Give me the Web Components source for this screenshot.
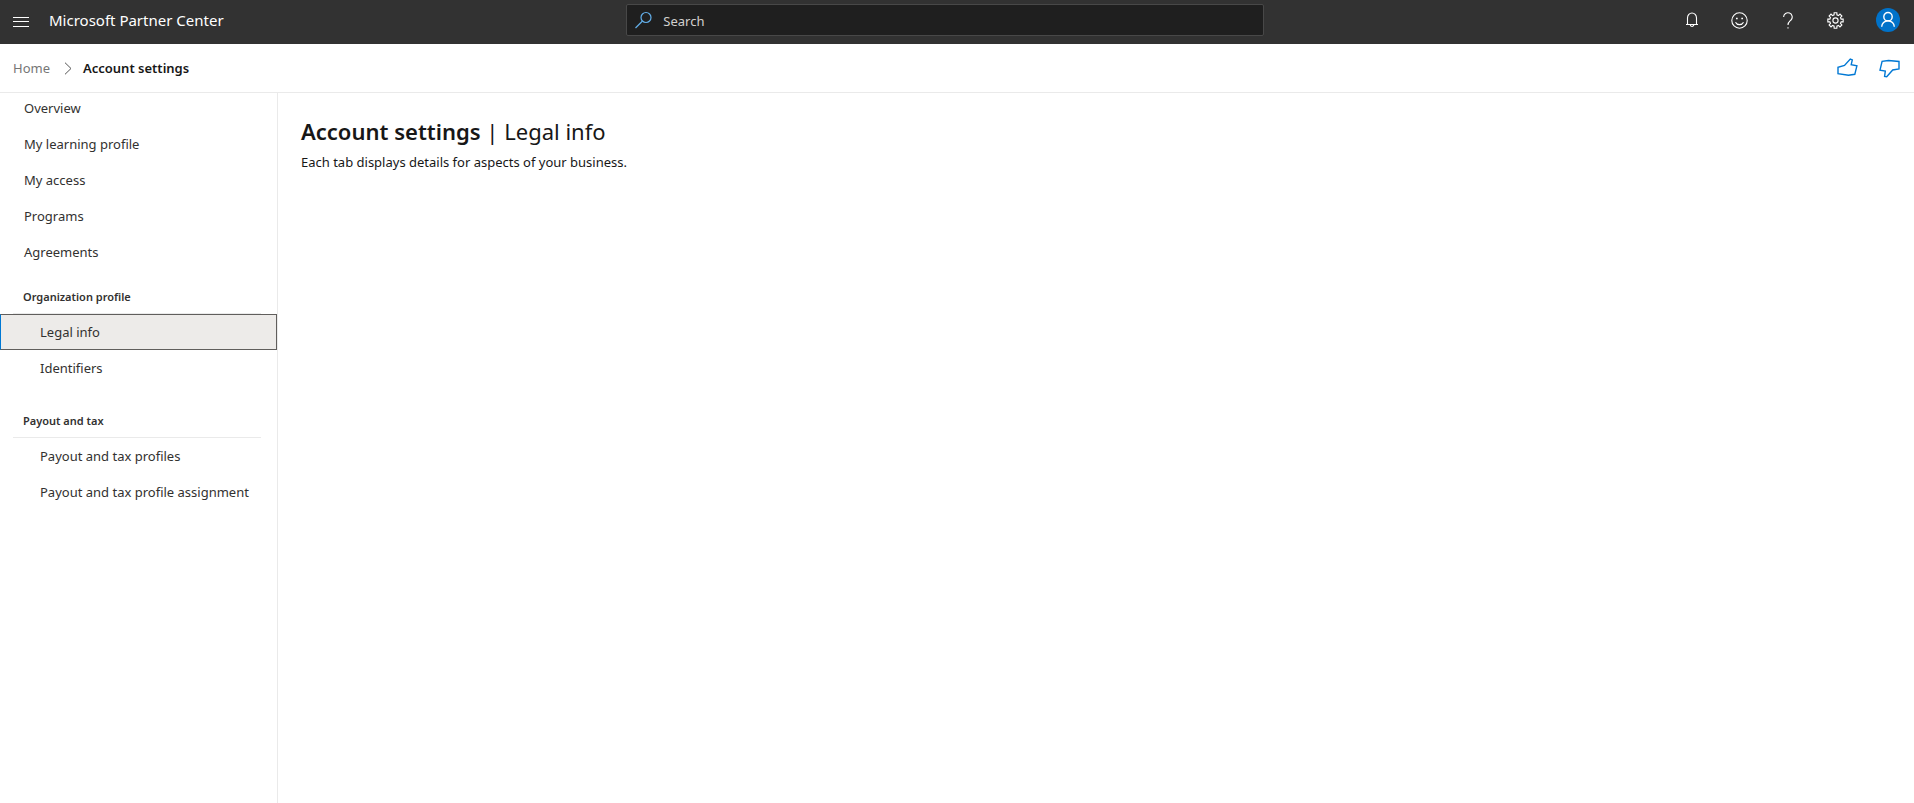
<!DOCTYPE html>
<html lang="en">
<head>
<meta charset="utf-8">
<title>Account settings - Microsoft Partner Center</title>
<style>
html, body { height: 100%; }
body { margin: 0; background: #fff; color: #323130; font: 13px/20px "Noto Sans", "Open Sans", sans-serif; }
</style>
</head>
<body>
<partner-app></partner-app>

<template id="partner-app">
  <style>
    :host { display: flex; flex-direction: column; min-height: 100%; }
    .body { display: flex; flex: 1; }
    main { flex: 1; padding: 24px 23px; }
  </style>
  <top-bar heading="Microsoft Partner Center">
    <icon-button icon="bell" label="Notifications"></icon-button>
    <icon-button icon="smile" label="Feedback"></icon-button>
    <icon-button icon="help" label="Help"></icon-button>
    <icon-button icon="gear" label="Settings"></icon-button>
    <icon-button icon="person" label="Account"></icon-button>
  </top-bar>
  <crumb-bar>
    <a slot="parent" href="#home">Home</a>
    <span slot="current" aria-current="page">Account settings</span>
    <icon-button icon="thumb-up" label="Like"></icon-button>
    <icon-button icon="thumb-down" label="Dislike"></icon-button>
  </crumb-bar>
  <div class="body">
    <side-nav>
      <nav-item>Overview</nav-item>
      <nav-item>My learning profile</nav-item>
      <nav-item>My access</nav-item>
      <nav-item>Programs</nav-item>
      <nav-item>Agreements</nav-item>
      <nav-group>
        <span slot="heading">Organization profile</span>
        <nav-item nested selected>Legal info</nav-item>
        <nav-item nested>Identifiers</nav-item>
      </nav-group>
      <nav-group>
        <span slot="heading">Payout and tax</span>
        <nav-item nested>Payout and tax profiles</nav-item>
        <nav-item nested>Payout and tax profile assignment</nav-item>
      </nav-group>
    </side-nav>
    <main>
      <page-heading>
        <b slot="area">Account settings</b>
        <span slot="page">Legal info</span>
        <span slot="summary">Each tab displays details for aspects of your business.</span>
      </page-heading>
    </main>
  </div>
</template>

<template id="top-bar">
  <style>
    :host { display: flex; justify-content: space-between; height: 44px; background: #323232; color: #fff; }
    .brand { display: flex; align-items: center; flex: none; width: 222px; }
    .menu { display: grid; place-items: center; flex: none; width: 42px; height: 40px; padding: 0; border: 0; background: none; color: inherit; }
    .title { margin-left: 7px; padding-bottom: 4px; font-size: 15px; white-space: nowrap; }
    .search { display: flex; align-items: center; box-sizing: border-box; width: 33.3%; height: 32px; margin-top: 4px;
      border: 1px solid #484848; border-radius: 2px; background: #1f1f1f; }
    .search svg { flex: none; margin: 0 10px 0 8px; }
    input { flex: 1; min-width: 0; height: 100%; padding: 2px 0 0; box-sizing: border-box; border: 0; outline: 0; background: none; color: #fff; font: inherit; }
    input::placeholder { color: #d2d0ce; opacity: 1; }
    .tools { display: flex; flex: none; height: 40px; }
    ::slotted(icon-button) { width: 48px; height: 40px; }
    ::slotted([icon="person"]) { margin: 0 2px 0 4px; }
  </style>
  <div class="brand">
    <button class="menu" aria-label="Menu"><svg width="16" height="10" fill="none" stroke="currentColor"><path d="M0 .5h16M0 4.5h16M0 9.5h16"/></svg></button>
    <span class="title"></span>
  </div>
  <label class="search">
    <svg width="18" height="18" fill="none" stroke="#62aee8" stroke-width="1.2" aria-hidden="true"><circle cx="11" cy="6.500" r="5"/><path d="M7.500 10L.5 17"/></svg>
    <input type="text" placeholder="Search" aria-label="Search">
  </label>
  <div class="tools"><slot></slot></div>
</template>

<template id="crumb-bar">
  <style>
    :host { display: flex; align-items: center; height: 48px; padding: 0 4px 0 13px; border-bottom: 1px solid #eaeaea; }
    .path { display: flex; align-items: center; gap: 14px; flex: 1; }
    ::slotted(a) { color: #767676; text-decoration: none; }
    ::slotted(span) { color: #171717; font-weight: 600; margin-left: -3px; }
    ::slotted(icon-button) { width: 42px; height: 48px; color: #0078d4; }
  </style>
  <nav class="path" aria-label="Breadcrumb">
    <slot name="parent"></slot>
    <svg width="8" height="13" fill="none" stroke="#555" aria-hidden="true"><path d="M1 .7L7 6.500L1 12.300"/></svg>
    <slot name="current"></slot>
  </nav>
  <slot></slot>
</template>

<template id="icon-button">
  <style>
    :host { display: block; }
    button { display: grid; place-items: center; width: 100%; height: 100%; padding: 0; border: 0; background: none; color: inherit; }
  </style>
  <button></button>
</template>

<template id="side-nav">
  <style>
    :host { display: block; flex: none; width: 277px; border-right: 1px solid #eaeaea; }
    nav { margin-top: -3px; }
  </style>
  <nav aria-label="Account"><slot></slot></nav>
</template>

<template id="nav-group">
  <style>
    :host { display: block; padding-bottom: 8px; }
    h2 { margin: 0 16px 0 13px; padding: 18px 0 8px 10px; border-bottom: 1px solid #eaeaea; font-size: 11px; line-height: 17px; font-weight: 600; }
  </style>
  <h2><slot name="heading"></slot></h2>
  <slot></slot>
</template>

<template id="nav-item">
  <style>
    :host { display: block; }
    a { display: flex; align-items: center; box-sizing: border-box; height: 36px; padding: 0 16px 0 23px; border: 1px solid transparent; color: inherit; text-decoration: none; white-space: nowrap; }
    :host([nested]) a { padding-left: 39px; }
    :host([selected]) a { background: #edebe9; border-color: #605e5c; border-left-color: #0078d4; }
  </style>
  <a><slot></slot></a>
</template>

<template id="page-heading">
  <style>
    :host { display: block; color: #171717; }
    h1 { margin: 0; font-size: 22px; line-height: 28px; font-weight: 400; }
    ::slotted(b) { font-weight: 600; }
    p { margin: 7px 0 0; }
  </style>
  <h1><slot name="area"></slot> | <slot name="page"></slot></h1>
  <p><slot name="summary"></slot></p>
</template>

<script>
const gearPath = (() => {
  const points = [];
  for (let i = 0; i < 8; i++) {
    for (const [offset, radius] of [[-14, 5.8], [-10, 7.8], [10, 7.8], [14, 5.8]]) {
      const angle = (i * 45 + offset) * Math.PI / 180;
      points.push((8.5 + radius * Math.sin(angle)).toFixed(2) + ' ' + (8.5 - radius * Math.cos(angle)).toFixed(2));
    }
  }
  return 'M' + points.join('L') + 'Z';
})();

const line = (w, h, inner, weight = 1.1) =>
  `<svg width="${w}" height="${h}" viewBox="0 0 ${w} ${h}" fill="none" stroke="currentColor" stroke-width="${weight}" aria-hidden="true">${inner}</svg>`;

const ICONS = {
  bell: line(12, 16, '<path d="M0 12.500H12M1.500 12.500V6a4.500 5 0 0 1 9 0V12.500M4.200 12.600a1.800 1.900 0 0 0 3.600 0"/>'),
  smile: line(17, 17, '<circle cx="8.500" cy="8.500" r="7.700"/><path d="M4.500 10.200a4.400 4.200 0 0 0 8 0"/><path d="M5 6.500h1.700M10.300 6.500h1.700" stroke-width="1.700"/>'),
  help: line(10, 17, '<path d="M.6 5a4.300 4.300 0 1 1 7.400 3C6.200 9.700 5 10.300 5 13"/><path d="M5 15.200v1.300"/>'),
  gear: line(17, 17, `<path d="${gearPath}"/><circle cx="8.500" cy="8.500" r="2.600"/>`),
  person: '<svg width="24" height="24" fill="none" stroke="#fff" stroke-width="1.400" aria-hidden="true"><circle cx="12" cy="12" r="12" fill="#0072c9" stroke="none"/><circle cx="12" cy="8.700" r="4.200"/><path d="M5.700 18.800a6.300 6 0 0 1 12.600 0"/></svg>',
  'thumb-up': line(21, 20, '<path d="M1 9.200V15.700L11.500 17.200L17.800 16.300L19.900 7.800L14.200 6.700L15.300 1.900L13.300 1L7.500 7.500Z"/>', 1.4),
  'thumb-down': line(21, 19, '<path d="M20 2.500V10L13.700 11L7.700 17.800L5.600 17.500L6.300 12.100L1 11.200L3.100 2.400L9.500 1.500Z"/>', 1.4)
};

class TemplateElement extends HTMLElement {
  constructor() {
    super();
    this.attachShadow({ mode: 'open' }).append(document.getElementById(this.localName).content.cloneNode(true));
  }
}

class TopBar extends TemplateElement {
  connectedCallback() { this.shadowRoot.querySelector('.title').textContent = this.getAttribute('heading'); }
}

class IconButton extends TemplateElement {
  connectedCallback() {
    const button = this.shadowRoot.querySelector('button');
    button.setAttribute('aria-label', this.getAttribute('label'));
    button.innerHTML = ICONS[this.getAttribute('icon')];
  }
}

class NavItem extends TemplateElement {
  connectedCallback() {
    const link = this.shadowRoot.querySelector('a');
    link.href = '#' + this.textContent.trim().toLowerCase().replace(/\s+/g, '-');
    if (this.hasAttribute('selected')) link.setAttribute('aria-current', 'page');
  }
}

customElements.define('icon-button', IconButton);
customElements.define('nav-item', NavItem);
customElements.define('nav-group', class extends TemplateElement {});
customElements.define('side-nav', class extends TemplateElement {});
customElements.define('page-heading', class extends TemplateElement {});
customElements.define('crumb-bar', class extends TemplateElement {});
customElements.define('top-bar', TopBar);
customElements.define('partner-app', class extends TemplateElement {});
</script>
</body>
</html>
